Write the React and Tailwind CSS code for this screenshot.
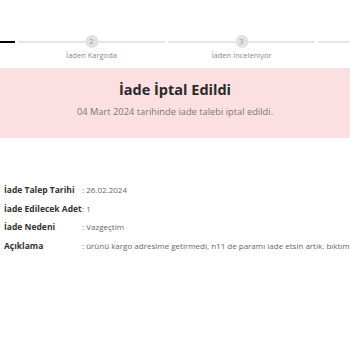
export default function App() {
  const steps = [
    { n: null, label: "", done: true },
    { n: 2, label: "İaden Kargoda" },
    { n: 3, label: "İaden İnceleniyor" },
    { n: 4, label: "" },
  ];
  const rows = [
    ["İade Talep Tarihi", "26.02.2024"],
    ["İade Edilecek Adet", "1"],
    ["İade Nedeni", "Vazgeçtim"],
    ["Açıklama", "ürünü kargo adresime getirmedi, n11 de paramı iade etsin artık. bıktım bu işten"],
  ];
  return (
    <div className="w-[350px] h-[350px] overflow-hidden bg-white" style={{ fontFamily: "'Open Sans', sans-serif" }}>
      <div className="h-[35px]" />
      <div className="flex gap-[3px] ml-[-132px] w-[600px]">
        {steps.map((s, i) => (
          <div key={i} className="w-[147px] shrink-0 flex flex-col items-center">
            <div className="relative w-full h-[13px] flex items-center">
              <div className={s.done ? "w-full h-[2px] bg-black" : "w-full h-[2px] bg-[#e6e6e6]"} />
              {s.n && (
                <div className="absolute left-1/2 top-0 -translate-x-1/2 w-[13px] h-[13px] rounded-full bg-[#e2e2e2] text-[7.5px] text-[#9a9a9a] flex items-center justify-center leading-none">
                  {s.n}
                </div>
              )}
            </div>
            <div className="text-[7.5px] text-[#8a8a8a] mt-[2px] leading-[10px] whitespace-nowrap">{s.label}</div>
          </div>
        ))}
      </div>
      <div className="mt-[8px] h-[70px] bg-[#fcdfe0] flex flex-col items-center">
        <div className="mt-[12px] text-[14.5px] font-bold text-[#2a2a2a] leading-[20px]">İade İptal Edildi</div>
        <div className="mt-[6px] text-[9.3px] text-[#777] leading-[12px]">04 Mart 2024 tarihinde iade talebi iptal edildi.</div>
      </div>
      <div className="mt-[46px] pl-[4px] flex flex-col gap-[6.5px]">
        {rows.map(([k, v]) => (
          <div key={k} className="flex items-baseline whitespace-nowrap h-[12px]">
            <span className="min-w-[78px] text-[8.5px] font-bold text-[#333]">{k}</span>
            <span className="text-[8px] text-[#666]">: {v}</span>
          </div>
        ))}
      </div>
    </div>
  );
}
